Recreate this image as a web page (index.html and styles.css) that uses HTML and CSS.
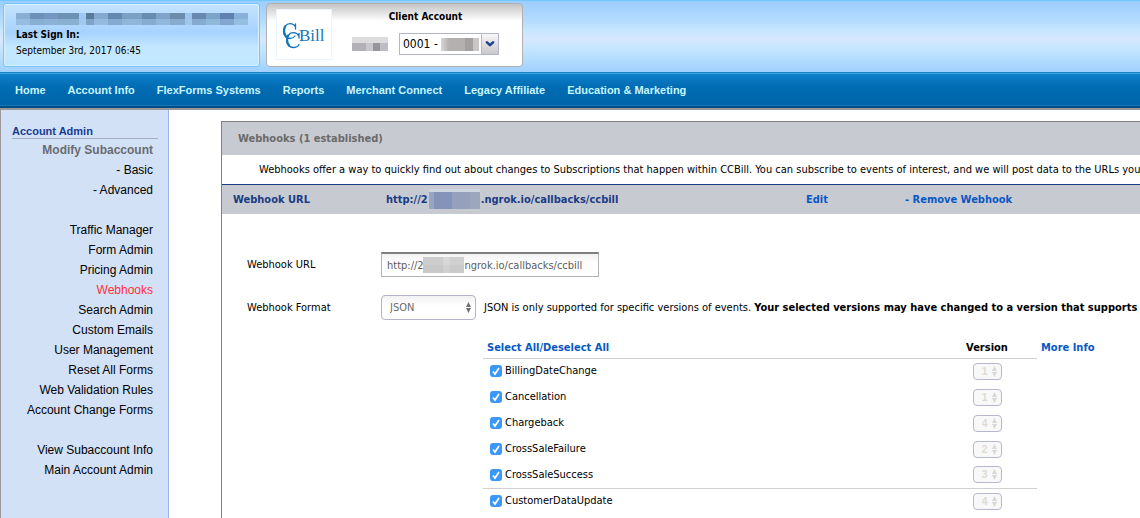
FILE: index.html
```html
<!DOCTYPE html>
<html lang="en">
<head>
<meta charset="utf-8">
<title>Webhooks</title>
<link rel="stylesheet" href="styles.css">
</head>
<body>
<header class="banner">
  <section class="signin">
    <div class="mosaic mosaic-name"></div>
    <strong>Last Sign In:</strong>
    <span>September 3rd, 2017 06:45</span>
  </section>
  <section class="client">
    <a class="logo" href="#" aria-label="CCBill">
      <svg width="54" height="49" viewBox="0 0 54 49" fill="#1474b8" font-family="Liberation Serif, serif">
        <path fill="none" stroke="#1474b8" stroke-width="1.300" stroke-linecap="round" d="M18.500 19v-5M18.500 17c-1-2-3-3.300-5.500-3.300c-4 0-6.500 3.500-6.500 7.800c0 4 3 7 6.500 7c2 0 4-1 5-2.500M22 28v-4.500M22 26c-1.500-2.500-3.500-3.300-5.500-3.300c-4 0-7 3.500-7 7.600c0 4.200 3 7.200 7 7.200c2.500 0 4.500-1 5.500-3"/>
        <path fill="none" stroke="#1474b8" stroke-width="2.200" d="M8.500 16c-2 3-2 8 1 11M11.500 25c-2 3-2 8 1 11"/>
        <text x="22" y="31" font-size="17">Bill</text>
      </svg>
    </a>
    <div class="client-fields">
      <label for="account">Client Account</label>
      <div class="client-row">
        <span class="mosaic mosaic-id"></span>
        <div class="account-box">
          <select id="account"><option>0001 -</option></select>
          <span class="mosaic mosaic-account"></span>
          <svg class="account-arrow" width="17" height="20" viewBox="0 0 17 20"><path d="M4 7h2l2.500 2.500L11 7h2v2l-4.500 4L4 9z" fill="#1e418c"/></svg>
        </div>
      </div>
    </div>
  </section>
</header>
<nav class="menu">
  <a href="#">Home</a><a href="#">Account Info</a><a href="#">FlexForms Systems</a><a href="#">Reports</a><a href="#">Merchant Connect</a><a href="#">Legacy Affiliate</a><a href="#">Education &amp; Marketing</a>
</nav>
<div class="page">
  <aside class="sidebar">
    <h2>Account Admin</h2>
    <h3>Modify Subaccount</h3>
    <ul>
      <li><a href="#">- Basic</a></li>
      <li><a href="#">- Advanced</a></li>
    </ul>
    <ul>
      <li><a href="#">Traffic Manager</a></li>
      <li><a href="#">Form Admin</a></li>
      <li><a href="#">Pricing Admin</a></li>
      <li><a class="current" href="#">Webhooks</a></li>
      <li><a href="#">Search Admin</a></li>
      <li><a href="#">Custom Emails</a></li>
      <li><a href="#">User Management</a></li>
      <li><a href="#">Reset All Forms</a></li>
      <li><a href="#">Web Validation Rules</a></li>
      <li><a href="#">Account Change Forms</a></li>
    </ul>
    <ul>
      <li><a href="#">View Subaccount Info</a></li>
      <li><a href="#">Main Account Admin</a></li>
    </ul>
  </aside>
  <main class="content">
    <section class="panel">
      <h1>Webhooks (1 established)</h1>
      <p class="intro">Webhooks offer a way to quickly find out about changes to Subscriptions that happen within CCBill. You can subscribe to events of interest, and we will post data to the URLs you spe</p>
      <div class="hook">
        <span class="hook-label">Webhook URL</span>
        <span class="hook-url">http://2<span class="mosaic mosaic-host"></span>.ngrok.io/callbacks/ccbill</span>
        <a class="hook-edit" href="#">Edit</a>
        <a href="#">- Remove Webhook</a>
      </div>
      <form class="form">
        <label for="url">Webhook URL</label>
        <div class="url-box">
          <input id="url" type="text" value="http://2&nbsp;&nbsp;&nbsp;&nbsp;&nbsp;&nbsp;&nbsp;&nbsp;&nbsp;&nbsp;b.ngrok.io/callbacks/ccbill">
          <span class="mosaic mosaic-url"></span>
        </div>
        <label for="format">Webhook Format</label>
        <div class="format-row">
          <select id="format"><option>JSON</option></select>
          <span>JSON is only supported for specific versions of events. <b>Your selected versions may have changed to a version that supports JS</b></span>
        </div>
        <div class="events-row">
          <table class="events">
            <thead>
              <tr><th><a href="#">Select All/Deselect All</a></th><th class="version">Version</th></tr>
            </thead>
            <tbody>
              <tr><td><label><input type="checkbox" checked>BillingDateChange</label></td><td class="version"><select aria-label="BillingDateChange version" disabled><option>1</option></select></td></tr>
              <tr><td><label><input type="checkbox" checked>Cancellation</label></td><td class="version"><select aria-label="Cancellation version" disabled><option>1</option></select></td></tr>
              <tr><td><label><input type="checkbox" checked>Chargeback</label></td><td class="version"><select aria-label="Chargeback version" disabled><option>4</option></select></td></tr>
              <tr><td><label><input type="checkbox" checked>CrossSaleFailure</label></td><td class="version"><select aria-label="CrossSaleFailure version" disabled><option>2</option></select></td></tr>
              <tr><td><label><input type="checkbox" checked>CrossSaleSuccess</label></td><td class="version"><select aria-label="CrossSaleSuccess version" disabled><option>3</option></select></td></tr>
            </tbody>
            <tbody>
              <tr><td><label><input type="checkbox" checked>CustomerDataUpdate</label></td><td class="version"><select aria-label="CustomerDataUpdate version" disabled><option>4</option></select></td></tr>
            </tbody>
          </table>
          <a class="more" href="#">More Info</a>
        </div>
      </form>
    </section>
  </main>
</div>
</body>
</html>
```
FILE: styles.css
```css
* { box-sizing: border-box; }
html { height: 100%; overflow: hidden; }
body {
  margin: 0;
  min-height: 100%;
  display: flex;
  flex-direction: column;
  background: #fff;
  color: #000;
  font: 11px/16px "DejaVu Sans Condensed", "DejaVu Sans", sans-serif;
}
a { color: #0858c4; text-decoration: none; }
select, input { font: inherit; margin: 0; }

/* Banner */
.banner {
  display: flex;
  gap: 6px;
  padding: 2px 3px 5px;
  border-top: 1px solid #70c8ff;
  background: linear-gradient(#9bcdff, #b4dcff 20px, #c4e6ff 28px, #d6e8ff 38px, #c4e6ff 48px, #a0d0ff 71px);
}
.signin {
  width: 257px;
  height: 64px;
  display: flex;
  flex-direction: column;
  padding: 9px 12px 0;
  border: 1px solid #76c6fc;
  border-radius: 3px;
  box-shadow: inset 0 0 0 1px #d8f0ff;
  background: linear-gradient(#c4e4ff, #a8d2ff 28px, #c4e8ff 44px, #c0e6ff);
  font-size: 10px;
}
.mosaic { display: block; flex: none; }
.mosaic-name {
  width: 232px;
  height: 12px;
  margin-bottom: 2px;
  background:
    linear-gradient(#ffffff00 50%, #a4ccee80 50%),
    linear-gradient(90deg, #88aed4 0 14px, #6c90b8 14px 28px, #7496c0 28px 42px, #6e92b4 42px 63px, #a0c8f4 63px 70px, #587c9c 70px 78px, #84a8d0 78px 92px, #6488b0 92px 106px, #7ca0c4 106px 126px, #688cb0 126px 140px, #80a4c8 140px 154px, #6c8cac 154px 169px, #9cc4ec 169px 176px, #6888b0 176px 190px, #7ca4c8 190px 204px, #6080b0 204px 218px, #88b0d8 218px);
}
.client {
  width: 257px;
  height: 64px;
  display: flex;
  gap: 20px;
  padding: 5px 9px;
  border: 1px solid #b0b0b4;
  border-radius: 4px;
  background: linear-gradient(#c4c4c4, #fff 17px);
}
.logo {
  display: flex;
  width: 56px;
  height: 51px;
  border: 1px solid #eaf5ff;
  background: #fff;
}
.client-fields {
  display: flex;
  flex-direction: column;
  align-items: center;
  gap: 8px;
}
.client-fields label { font-weight: bold; font-size: 10px; }
.client-row { display: flex; align-items: center; gap: 11px; }
.mosaic-id {
  width: 36px;
  height: 14px;
  background: linear-gradient(#dcdcde 40%, #ffffff00 40%), linear-gradient(90deg, #b4b0b8 0 14px, #c8c8cc 14px 21px, #969698 21px 28px, #bcbcc4 28px);
}
.account-box { position: relative; width: 100px; height: 22px; }
.account-box select {
  width: 100%;
  height: 22px;
  padding: 0 20px 0 3px;
  appearance: none;
  border: 1px solid #b2b4cc;
  border-radius: 0;
  background: #fff;
  color: #000;
  font-size: 12px;
}
.mosaic-account {
  position: absolute;
  left: 42px;
  top: 5px;
  width: 38px;
  height: 13px;
  background: linear-gradient(90deg, #d8d6d6, #b4b0b0 8px 24px, #a4a0a0 24px 32px, #c8c6c6 32px);
}
.account-arrow {
  position: absolute;
  top: 1px;
  right: 1px;
  border-left: 1px solid #b8bac8;
  background: linear-gradient(#f8f8f8, #c8c8cc);
  pointer-events: none;
}

/* Main menu */
.menu {
  display: flex;
  gap: 22px;
  padding: 9px 15px 8px;
  border-bottom: 2px solid #9c9696;
  background: linear-gradient(#1880c4 1px, #40a4dc 1px 2px, #1080c8 2px, #006cb4 15px, #0064a8 33px, #1478bc 33px 34px, #004c84 34px);
  font: bold 11px/19px "Liberation Sans", Arial, sans-serif;
  white-space: nowrap;
}
.menu a { color: #c8f6ff; }

/* Page */
.page { display: flex; flex: 1; }
.sidebar {
  flex: none;
  width: 169px;
  padding: 14px 10px 30px 11px;
  border-left: 1px solid #9c9a9a;
  border-right: 1px solid #98b8ec;
  background: #d3e1f7;
  text-align: right;
  font: 12px/20px "Liberation Sans", Arial, sans-serif;
}
.sidebar h2 {
  margin: 0 0 1px;
  border-bottom: 1px solid #a8acc8;
  color: #183c90;
  font-size: 11px;
  line-height: 14px;
  text-align: left;
}
.sidebar h3 { margin: 0 5px 0 0; color: #6a6c70; font-size: 12px; }
.sidebar ul { margin: 0 5px 20px 0; padding: 0; list-style: none; }
.sidebar a { color: #000; }
.sidebar .current { color: #ff3038; }

.content { flex: 1; min-width: 0; padding: 11px 0 0 52px; }
.panel {
  height: 100%;
  border: solid #808080;
  border-width: 1px 0 0 1px;
  white-space: nowrap;
}
.panel h1 {
  margin: 0;
  padding: 9px 16px 8px;
  background: #c8cad2;
  color: #6a6a6a;
  font-size: 11px;
  line-height: 16px;
}
.intro { margin: 0; padding: 7px 0 6px 37px; }
.hook {
  display: grid;
  grid-template-columns: 153px 420px 99px 1fr;
  padding: 7px 11px 6px;
  border-top: 1px solid #183c84;
  background: #c8cad2;
  color: #183c84;
  font-weight: bold;
}
.hook-url { display: flex; }
.mosaic-host {
  width: 51px;
  height: 20px;
  margin: -3px 1px -1px 1px;
  background: linear-gradient(#d0d6e0 15%, #ffffff00 15%), linear-gradient(90deg, #98a4c4 0 5px, #8494b8 5px 23px, #94a0bc 23px 41px, #9ca6bc 41px);
}

/* Webhook form */
.form {
  display: grid;
  grid-template-columns: 134px 1fr;
  align-items: center;
  row-gap: 18px;
  padding: 38px 0 0 25px;
}
.url-box { position: relative; width: 218px; }
.url-box input {
  display: block;
  width: 100%;
  height: 25px;
  padding: 0 5px;
  border: 1px solid #b4b4b4;
  border-top: 2px solid #808080;
  border-radius: 0;
  background: linear-gradient(#f2f2f2, #fff 10px);
  color: #5c5c5c;
}
.mosaic-url {
  position: absolute;
  left: 42px;
  top: 5px;
  width: 41px;
  height: 16px;
  background: linear-gradient(#e0e0e030 50%, #c8c8c860 50%), linear-gradient(90deg, #c8c8c8 0 20px, #d6d6d6 20px 27px, #cccccc 27px);
}
.format-row { display: flex; align-items: center; gap: 8px; }
.format-row select {
  width: 95px;
  height: 25px;
  padding: 0 8px;
  appearance: none;
  border: 1px solid #b2b4cc;
  border-radius: 4px;
  background: url("data:image/svg+xml,%3Csvg xmlns='http://www.w3.org/2000/svg' width='5' height='11'%3E%3Cpath d='M0 5L2.500 0L5 5zM0 6L2.500 11L5 6z' fill='%23707070'/%3E%3C/svg%3E") no-repeat right 4px center, linear-gradient(#f2f2f2, #fff 10px);
  color: #6a6a6a;
}
.events-row {
  grid-column: 2;
  display: flex;
  align-items: flex-start;
  gap: 4px;
  padding-left: 102px;
}
.events { width: 554px; border-collapse: collapse; }
.events th { height: 20px; padding: 0 4px; text-align: left; }
.events tbody { border-top: 1px solid #cfd0d2; }
.events td { height: 26px; padding: 0; }
.events .version { width: 100px; padding: 0; text-align: center; }
.events label { display: flex; align-items: center; gap: 3px; padding-left: 7px; }
.events input {
  width: 12px;
  height: 12px;
  appearance: none;
  border-radius: 3px;
  background: #3c98f8 url("data:image/svg+xml,%3Csvg xmlns='http://www.w3.org/2000/svg' width='12' height='12'%3E%3Cpath d='M3 6.500L5 9L9 3' fill='none' stroke='white' stroke-width='1.700'/%3E%3C/svg%3E");
}
.events select {
  display: block;
  width: 29px;
  height: 17px;
  margin: 0 auto;
  padding: 0 0 0 8px;
  appearance: none;
  border: 1px solid #b6b8d0;
  border-radius: 4px;
  background: #f8f8f8 url("data:image/svg+xml,%3Csvg xmlns='http://www.w3.org/2000/svg' width='5' height='11'%3E%3Cpath d='M0 5L2.500 0L5 5zM0 6L2.500 11L5 6z' fill='%23d8d8d4'/%3E%3C/svg%3E") no-repeat right 4px center;
  color: #dcdcd4;
  opacity: 1;
  font: bold 11px/15px "Liberation Sans", Arial, sans-serif;
}
.more { font-weight: bold; line-height: 20px; }
```
